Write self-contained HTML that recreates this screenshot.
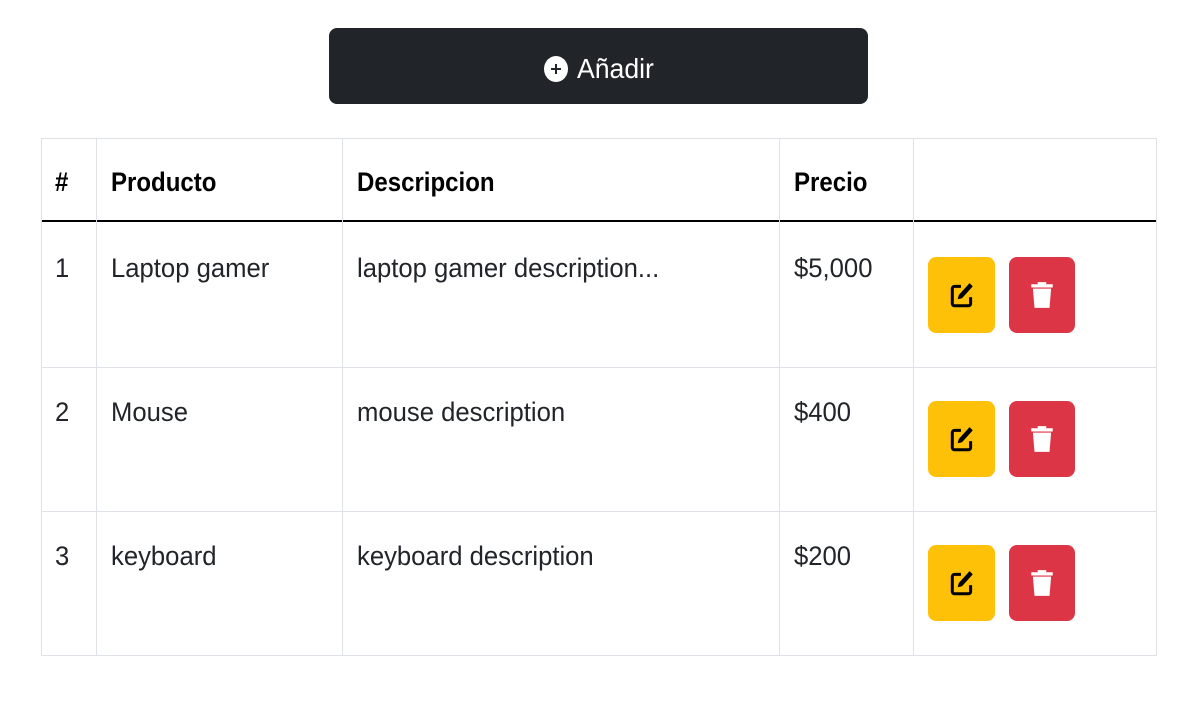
<!DOCTYPE html>
<html><head><meta charset="utf-8"><style>
body{margin:0;width:1200px;height:720px;background:#fff;position:relative;overflow:hidden;font-family:"Liberation Sans",sans-serif;color:#212529}
.a{position:absolute}
.t{position:absolute;font-size:27px;transform:scaleX(0.95);transform-origin:left center;white-space:nowrap;line-height:30px}
.b{font-weight:bold;color:#000;transform:scaleX(0.89)}
.vl{position:absolute;width:1px;background:#dee2e6;top:138px;height:518px}
.hl{position:absolute;left:41px;width:1115px;height:1px;background:#dee2e6}
.y{position:absolute;left:928px;width:67px;height:76px;background:#ffc107;border-radius:8px}
.r{position:absolute;left:1009px;width:66px;height:76px;background:#dc3545;border-radius:8px}
.y svg,.r svg{position:absolute;left:50%;top:50%;transform:translate(-50%,-50%)}
</style></head><body>
<div class="a" style="left:329px;top:28px;width:539px;height:76px;background:#212529;border-radius:8px"></div>
<svg class="a" style="left:543px;top:55px" width="26" height="28" viewBox="0 0 26 28"><ellipse cx="13" cy="14" rx="12" ry="13" fill="#fff"/><path d="M13 9v10M8 14h10" stroke="#212529" stroke-width="2"/></svg>
<div class="t" style="left:577px;top:54px;color:#fff;font-size:28px">Añadir</div>

<div class="hl" style="top:138px"></div>
<div class="a" style="left:41px;top:220px;width:1115px;height:2px;background:#000"></div>
<div class="hl" style="top:367px"></div>
<div class="hl" style="top:511px"></div>
<div class="hl" style="top:655px"></div>
<div class="vl" style="left:41px"></div><div class="vl" style="left:96px"></div><div class="vl" style="left:342px"></div><div class="vl" style="left:779px"></div><div class="vl" style="left:913px"></div><div class="vl" style="left:1156px"></div>

<div class="t b" style="left:55px;top:167px">#</div>
<div class="t b" style="left:111px;top:167px">Producto</div>
<div class="t b" style="left:357px;top:167px">Descripcion</div>
<div class="t b" style="left:794px;top:167px">Precio</div>

<div class="t" style="left:55px;top:253px">1</div><div class="t" style="left:111px;top:253px">Laptop gamer</div><div class="t" style="left:357px;top:253px">laptop gamer description...</div><div class="t" style="left:794px;top:253px">$5,000</div>
<div class="t" style="left:55px;top:397px">2</div><div class="t" style="left:111px;top:397px">Mouse</div><div class="t" style="left:357px;top:397px">mouse description</div><div class="t" style="left:794px;top:397px">$400</div>
<div class="t" style="left:55px;top:541px">3</div><div class="t" style="left:111px;top:541px">keyboard</div><div class="t" style="left:357px;top:541px">keyboard description</div><div class="t" style="left:794px;top:541px">$200</div>

<div class="y" style="top:257px"><svg width="26" height="28" viewBox="0 0 24 26"><path d="M11 5H5a2 2 0 0 0-2 2v14a2 2 0 0 0 2 2h13a2 2 0 0 0 2-2v-6" fill="none" stroke="#000" stroke-width="2.8"/><path d="M19 2l3 3-10 11-4 1 1-4z" fill="#000"/></svg></div>
<div class="r" style="top:257px"><svg width="24" height="30" viewBox="0 0 22 28"><path d="M7 2h8v2h6v3H1V4h6z" fill="#fff"/><path d="M2.5 8h17l-1.5 18H4z" fill="#fff"/></svg></div>
<div class="y" style="top:401px"><svg width="26" height="28" viewBox="0 0 24 26"><path d="M11 5H5a2 2 0 0 0-2 2v14a2 2 0 0 0 2 2h13a2 2 0 0 0 2-2v-6" fill="none" stroke="#000" stroke-width="2.8"/><path d="M19 2l3 3-10 11-4 1 1-4z" fill="#000"/></svg></div>
<div class="r" style="top:401px"><svg width="24" height="30" viewBox="0 0 22 28"><path d="M7 2h8v2h6v3H1V4h6z" fill="#fff"/><path d="M2.5 8h17l-1.5 18H4z" fill="#fff"/></svg></div>
<div class="y" style="top:545px"><svg width="26" height="28" viewBox="0 0 24 26"><path d="M11 5H5a2 2 0 0 0-2 2v14a2 2 0 0 0 2 2h13a2 2 0 0 0 2-2v-6" fill="none" stroke="#000" stroke-width="2.8"/><path d="M19 2l3 3-10 11-4 1 1-4z" fill="#000"/></svg></div>
<div class="r" style="top:545px"><svg width="24" height="30" viewBox="0 0 22 28"><path d="M7 2h8v2h6v3H1V4h6z" fill="#fff"/><path d="M2.5 8h17l-1.5 18H4z" fill="#fff"/></svg></div>
</body></html>
